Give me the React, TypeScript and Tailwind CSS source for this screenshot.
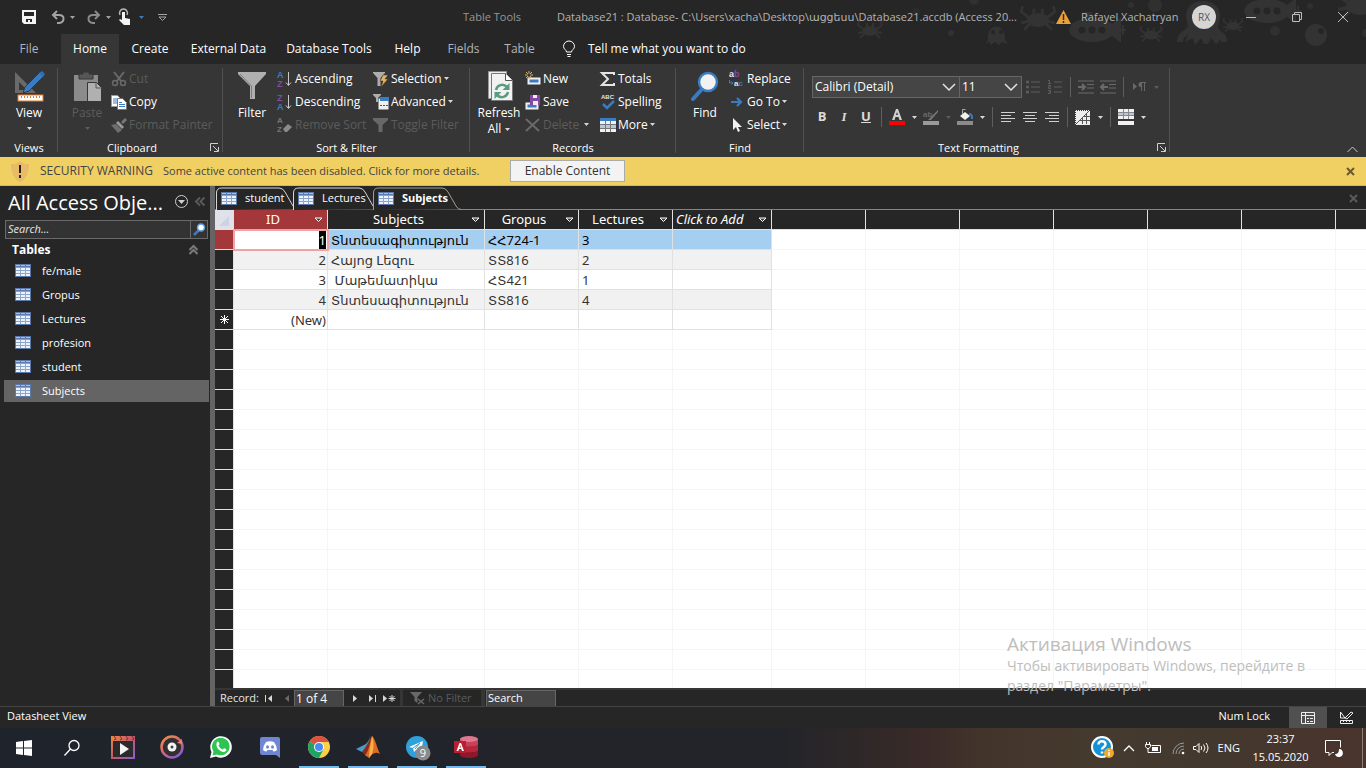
import React from "react";

type Kids = { children?: React.ReactNode };

const Svg = ({ w = 16, h = 16, vb, children }: Kids & { w?: number; h?: number; vb?: string }) => (
  <svg width={w} height={h} viewBox={vb ?? `0 0 ${w} ${h}`} fill="none" aria-hidden="true" className="shrink-0 overflow-visible">
    {children}
  </svg>
);

const Down = ({ color = "#d8d8d8" }: { color?: string }) => (
  <Svg w={5} h={3}><path d="M0 0h5L2.500 3z" fill={color} /></Svg>
);

const Sep = () => <span className="mx-1 h-5 w-px shrink-0 bg-[#5f5f5f]" />;

/* ---------- ribbon icons ---------- */

const ViewIcon = () => (
  <Svg w={32} h={32}>
    <path d="M2 2v21h21L2 2zm4 10 8 8H6v-8z" fill="#6a6a6a" fillRule="evenodd" />
    <path d="m10 23 2-6L27 2l4 4-15 15-6 2z" fill="#3a7cc4" stroke="#363636" />
    <path d="m26 3 3-2 3 3-2 3z" fill="#2f6fb5" />
    <rect x="5" y="25" width="25" height="6" fill="#fff" stroke="#e07b28" />
    <path d="M8.500 26v2m3-2v2m3-2v2m3-2v2m3-2v2m3-2v2m3-2v2" stroke="#e07b28" />
  </Svg>
);
const PasteIcon = () => (
  <Svg w={32} h={32}>
    <path d="M3 5h24v26H3z" fill="#8b8b8b" />
    <path d="M8 4h4V2h6v2h4v5H8z" fill="#575757" stroke="#363636" />
    <path d="M16.500 12.500h9l5 5v14h-14z" fill="#b0b0b0" stroke="#363636" />
    <path d="M25 12v6h6" stroke="#555" />
  </Svg>
);
const CutIcon = () => (
  <Svg>
    <path d="m3 1 7 9M13 1 6 10" stroke="#6a6a6a" strokeWidth="2" />
    <circle cx="4" cy="12" r="2.500" stroke="#6a6a6a" strokeWidth="1.500" />
    <circle cx="12" cy="12" r="2.500" stroke="#6a6a6a" strokeWidth="1.500" />
  </Svg>
);
const CopyIcon = () => (
  <Svg>
    <path d="M.5 1.500h6l3 3v8h-9z" fill="#fff" stroke="#9a9a9a" />
    <path d="M2 5h4M2 7h4M2 9h4" stroke="#3a7cc4" />
    <path d="M6.500 4.500h5l4 4v7h-9z" fill="#fff" stroke="#777" />
    <path d="M8 8.500h3m-3 2h6m-6 2h6" stroke="#3a7cc4" />
  </Svg>
);
const PainterIcon = () => (
  <Svg>
    <path d="m10 5 4-4 2 2-4 4z" fill="#777" />
    <path d="m7 4 6 6-2 2-6-6z" fill="#9a9a9a" />
    <path d="m5 7 6 6-4 3-7-8z" fill="#6e6e6e" />
  </Svg>
);
const FilterIcon = () => (
  <Svg w={32} h={32}>
    <path d="M2 2h28v2L19 16v13h-5V16L2 4z" fill="#b0b0b0" />
    <path d="M4 4l11.500 12v12" stroke="#7d7d7d" />
  </Svg>
);
const SortIcon = ({ top, bottom, tc, bc }: { top: string; bottom: string; tc: string; bc: string }) => (
  <Svg>
    <text x="0" y="7" fontSize="9" fontWeight="700" fill={tc} fontFamily="Liberation Sans">{top}</text>
    <text x="0" y="16" fontSize="9" fontWeight="700" fill={bc} fontFamily="Liberation Sans">{bottom}</text>
    <path d="M11.500 1v13M9 11.500l2.500 3 2.500-3" stroke="#c9c9c9" />
  </Svg>
);
const RemoveSortIcon = () => (
  <Svg>
    <text x="0" y="6" fontSize="8" fontWeight="700" fill="#777" fontFamily="Liberation Sans">A</text>
    <text x="0" y="15" fontSize="8" fontWeight="700" fill="#777" fontFamily="Liberation Sans">Z</text>
    <path d="m6 12 5-5 4 3-5 5H8z" fill="#8b8b8b" />
  </Svg>
);
const SelectionIcon = () => (
  <Svg>
    <path d="M0 1h12v1L7.500 7v8h-3V7L0 2z" fill="#adadad" />
    <path d="m10 4-3 6h3l-2 6 7-8h-3l3-4z" fill="#e3b15f" stroke="#363636" strokeWidth=".5" />
  </Svg>
);
const AdvancedIcon = () => (
  <Svg>
    <path d="M0 0h8v1L5 4v4H3V4L0 1z" fill="#adadad" />
    <path d="M5.500 4.500h10v11h-10z" fill="#efefef" />
    <path d="M7 3h9v4H7z" fill="#3a7cc4" />
    <path d="M7 11.500h2m1 0h2m1 0h2" stroke="#555" />
  </Svg>
);
const ToggleIcon = () => <Svg><path d="M0 1h15v2L9.500 8v7h-4V8L0 3z" fill="#686868" /></Svg>;
const RefreshIcon = () => (
  <Svg w={32} h={32}>
    <path d="M5.500 1.500h18v27h-18z" fill="#efefef" stroke="#999" />
    <path d="M8.500 3.500h14l7 7v20h-21z" fill="#f2f2f2" stroke="#777" />
    <path d="M22.500 3.500v7h7" fill="#fff" stroke="#555" />
    <path d="M13 20c1-5 7-7 11-3M25 22c-1 5-7 7-11 3" stroke="#5b9b80" strokeWidth="2.500" />
    <path d="M26.500 13v7h-7zM11.500 29v-7h7z" fill="#5b9b80" />
  </Svg>
);
const NewIcon = () => (
  <Svg>
    <path d="M3.500 7.500h11v5h-11z" fill="#3a7cc4" stroke="#efefef" strokeWidth="2" />
    <path d="M4 0v8M0 4h8M1 1l6 6M7 1 1 7" stroke="#e3b15f" />
    <circle cx="4" cy="4" r="1.500" fill="#363636" />
  </Svg>
);
const SaveIcon = () => (
  <Svg>
    <path d="M1.500 9.500h11v5h-11z" fill="#3a7cc4" stroke="#efefef" strokeWidth="2" />
    <path d="M5 1h10v10H5z" fill="#8449a0" />
    <path d="M8 1h4v3H8zm0 6h5v4H8z" fill="#f3e8f7" />
  </Svg>
);
const DeleteIcon = () => <Svg><path d="m1 2 13 12M14 2 1 14" stroke="#6a6a6a" strokeWidth="2" /></Svg>;
const SigmaIcon = () => <Svg><path d="M14 4V2H2l6 6-6 6h12v-2" stroke="#e4e4e4" strokeWidth="2" /></Svg>;
const SpellIcon = () => (
  <Svg>
    <text x="1" y="5" fontSize="6" fontWeight="700" fill="#e4e4e4" fontFamily="Liberation Sans">ABC</text>
    <path d="m3 10 4 4 7-7" stroke="#3a7cc4" strokeWidth="2.500" />
  </Svg>
);
const MoreIcon = () => (
  <Svg>
    <path d="M0 1h16v14H0z" fill="#f1f1f1" />
    <path d="M0 1h16v3H0z" fill="#3a7cc4" />
    <path d="M0 7h16v4H0z" fill="#b7c9dd" />
    <path d="M5.500 4v11m5-11v11M0 7.500h16m-16 4h16" stroke="#777" />
  </Svg>
);
const FindIcon = () => (
  <Svg w={32} h={32}>
    <path d="M14 18 4 29" stroke="#3a7cc4" strokeWidth="4" strokeLinecap="round" />
    <circle cx="19" cy="12" r="9" fill="#f2f2f2" stroke="#3a7cc4" strokeWidth="2.500" />
  </Svg>
);
const ReplaceIcon = () => (
  <Svg>
    <text x="0" y="6" fontSize="9" fontWeight="700" fontFamily="Liberation Sans" fill="#e4e4e4">a<tspan fill="#8449a0">b</tspan></text>
    <text x="5" y="15" fontSize="8" fontWeight="700" fontFamily="Liberation Sans" fill="#e4e4e4">a<tspan fill="#3a7cc4">c</tspan></text>
    <path d="M.5 9v3H4M2.500 10.500 4 12l-1.500 1.500" stroke="#3a7cc4" />
  </Svg>
);
const GoIcon = () => <Svg><path d="M2 8h10M8 4l4 4-4 4" stroke="#3a7cc4" strokeWidth="2.200" /></Svg>;
const CursorIcon = () => <Svg><path d="M4 1v12l3-3 2 5 2-1-2-4h4z" fill="#f1f1f1" /></Svg>;

/* ---------- ribbon building blocks ---------- */

const Group = ({ label, width, launcher, children }: Kids & { label: string; width: string; launcher?: boolean }) => (
  <section aria-label={label} className={`flex shrink-0 flex-col pt-[3px] ${width}`}>
    <div className="flex flex-1">
      <div className="min-w-0 flex-1">{children}</div>
      <span className="-mb-4 mt-px w-px bg-[#505050]" />
    </div>
    <div className="flex h-[21px] items-center justify-center pr-1 pt-[2px]">
      <span className={`flex-1 text-center text-[11px] leading-4 text-white ${launcher ? "pr-1" : "pl-1"}`}>{label}</span>
      {launcher && (
        <button aria-label={`${label} settings`}>
          <Svg w={9} h={9}><path d="M.5 8V.5H8M3 3l5 5M8.500 4v4.500H4" stroke="#cfcfcf" /></Svg>
        </button>
      )}
    </div>
  </section>
);

const Big = ({ icon, lines, arrow, off }: { icon: React.ReactNode; lines: string[]; arrow?: "below" | "beside"; off?: boolean }) => (
  <button disabled={off} className={`flex w-[58px] shrink-0 flex-col items-center pt-[3px] text-[12px] leading-4 ${off ? "text-[#5c5c5c]" : "text-white"}`}>
    {icon}
    {lines.map((l, i) => (
      <span key={l} className={`flex items-center gap-1 ${i === 0 ? "mt-[3px]" : ""}`}>
        {l}
        {arrow === "beside" && i === lines.length - 1 && <Down />}
      </span>
    ))}
    {arrow === "below" && <span className="mt-[6px]"><Down color={off ? "#5c5c5c" : "#d8d8d8"} /></span>}
  </button>
);

const Cmd = ({ icon, label, arrow, off }: { icon: React.ReactNode; label: string; arrow?: boolean; off?: boolean }) => (
  <button disabled={off} className={`flex h-[23px] w-full items-center gap-[2px] whitespace-nowrap text-[12px] ${off ? "text-[#5c5c5c]" : "text-white"}`}>
    {icon}
    <span>{label}</span>
    {arrow && <Down />}
  </button>
);

const Tool = ({ label, children, arrow, off }: Kids & { label: string; arrow?: boolean; off?: boolean }) => (
  <button aria-label={label} disabled={off} className="flex h-[22px] shrink-0 items-center">
    <span className="flex w-[22px] justify-center">{children}</span>
    {arrow && <span className="flex w-3 justify-center"><Down color={off ? "#5c5c5c" : "#d8d8d8"} /></span>}
  </button>
);

const Align = ({ d }: { d: string }) => <Svg w={14} h={12}><path d={d} stroke="#d0d0d0" /></Svg>;

const Ribbon = () => (
  <div className="relative flex h-[93px] shrink-0 bg-[#363636]">
    <Group label="Views" width="w-[58px]">
      <div className="-mr-px"><Big icon={<ViewIcon />} lines={["View"]} arrow="below" /></div>
    </Group>
    <Group label="Clipboard" width="w-[165px]" launcher>
      <div className="flex">
        <Big icon={<PasteIcon />} lines={["Paste"]} arrow="below" off />
        <div className="-ml-[5px]">
          <Cmd icon={<CutIcon />} label="Cut" off />
          <Cmd icon={<CopyIcon />} label="Copy" />
          <Cmd icon={<PainterIcon />} label="Format Painter" off />
        </div>
      </div>
    </Group>
    <Group label="Sort & Filter" width="w-[247px]">
      <div className="flex">
        <Big icon={<FilterIcon />} lines={["Filter"]} />
        <div className="-ml-1 w-24 shrink-0">
          <Cmd icon={<SortIcon top="A" bottom="Z" tc="#3a7cc4" bc="#8449a0" />} label="Ascending" />
          <Cmd icon={<SortIcon top="Z" bottom="A" tc="#8449a0" bc="#3a7cc4" />} label="Descending" />
          <Cmd icon={<RemoveSortIcon />} label="Remove Sort" off />
        </div>
        <div>
          <Cmd icon={<SelectionIcon />} label="Selection" arrow />
          <Cmd icon={<AdvancedIcon />} label="Advanced" arrow />
          <Cmd icon={<ToggleIcon />} label="Toggle Filter" off />
        </div>
      </div>
    </Group>
    <Group label="Records" width="w-[206px]">
      <div className="flex">
        <Big icon={<RefreshIcon />} lines={["Refresh", "All"]} arrow="beside" />
        <div className="-ml-[3px] w-[75px] shrink-0">
          <Cmd icon={<NewIcon />} label="New" />
          <Cmd icon={<SaveIcon />} label="Save" />
          <div className="flex items-center">
            <Cmd icon={<DeleteIcon />} label="Delete" off />
            <button aria-label="Delete options" className="-ml-4 mr-2 shrink-0"><Down /></button>
          </div>
        </div>
        <div>
          <Cmd icon={<SigmaIcon />} label="Totals" />
          <Cmd icon={<SpellIcon />} label="Spelling" />
          <Cmd icon={<MoreIcon />} label="More" arrow />
        </div>
      </div>
    </Group>
    <Group label="Find" width="w-[128px]">
      <div className="flex">
        <Big icon={<FindIcon />} lines={["Find"]} />
        <div className="-ml-[5px]">
          <Cmd icon={<ReplaceIcon />} label="Replace" />
          <Cmd icon={<GoIcon />} label="Go To" arrow />
          <Cmd icon={<CursorIcon />} label="Select" arrow />
        </div>
      </div>
    </Group>
    <Group label="Text Formatting" width="w-[366px]" launcher>
      <div className="flex flex-col gap-2 pl-2 pt-[9px]">
        <div className="flex h-[22px] items-center">
          <Combo label="Font" value="Calibri (Detail)" width="w-[148px]" />
          <Combo label="Font size" value="11" width="-ml-px w-[63px]" />
          <Tool label="Bullets" off><Svg w={14} h={14}><path d="M5 2h9M5 7h9M5 12h9" stroke="#5c5c5c" /><path d="M0 2h3M0 7h3M0 12h3" stroke="#5c5c5c" strokeWidth="2.500" /></Svg></Tool>
          <Tool label="Numbering" off>
            <Svg w={14} h={16}>
              <path d="M6 3h8M6 8h8M6 13h8" stroke="#5c5c5c" />
              <path d="M0 1.500h1.500v3M0 4.500h3M0 6.500h2.500v1.500H.5v1.500H3M0 11.500h2.500V13H1m1.500 0v1.500H0" stroke="#5c5c5c" />
            </Svg>
          </Tool>
          <Sep />
          <Tool label="Increase indent" off><Svg><path d="M0 2h16M9 5.500h7M9 9h7M0 14h16" stroke="#6a6a6a" /><path d="M0 8h7M4 5l3 3-3 3" stroke="#6a6a6a" strokeWidth="2" /></Svg></Tool>
          <Tool label="Decrease indent" off><Svg><path d="M0 2h16M9 5.500h7M9 9h7M0 14h16" stroke="#6a6a6a" /><path d="M8 8H1M4 5 1 8l3 3" stroke="#6a6a6a" strokeWidth="2" /></Svg></Tool>
          <Sep />
          <Tool label="Text direction" arrow off><Svg w={13} h={10}><path d="M0 1v7l4-3.500zM8 0a2.500 2.500 0 0 0 0 5v4h1V1h2v8h1V1h1V0z" fill="#686868" /></Svg></Tool>
        </div>
        <div className="-ml-px flex h-[22px] items-center text-[13px] font-bold text-[#dcdcdc]">
          <Tool label="Bold">B</Tool>
          <Tool label="Italic"><i className="font-['Liberation_Serif']">I</i></Tool>
          <Tool label="Underline"><u>U</u></Tool>
          <Sep />
          <Tool label="Font color" arrow><Svg><path d="m3 11 4-11h2l4 11h-2.500l-1-3h-3l-1 3zm4-5h2L8 3z" fill="#d0d0d0" /><path d="M0 12h16v4H0z" fill="#f00" /></Svg></Tool>
          <Tool label="Highlight" arrow off><Svg><text x="0" y="8" fontSize="8" fill="#686868" fontFamily="Liberation Sans">ab</text><path d="m15 1-7 7-3 3h3l7-8z" fill="#777" /><path d="M0 12h16v4H0z" fill="#9a9a9a" /></Svg></Tool>
          <Tool label="Fill color" arrow><Svg><path d="m3 7 5-4 5 4-5 4z" fill="#f1f1f1" /><path d="M5.500 5V.5h3" stroke="#aaa" /><path d="M12 5c3 0 3 2 3 5" stroke="#3a7cc4" strokeWidth="2" /><path d="M0 12h16v4H0z" fill="#8b8b8b" /></Svg></Tool>
          <Sep />
          <Tool label="Align left"><Align d="M0 1.500h14M0 4.500h10M0 7.500h14M0 10.500h10" /></Tool>
          <Tool label="Align center"><Align d="M0 1.500h14M2 4.500h10M0 7.500h14M2 10.500h10" /></Tool>
          <Tool label="Align right"><Align d="M0 1.500h14M4 4.500h10M0 7.500h14M4 10.500h10" /></Tool>
          <Sep />
          <Tool label="Gridlines" arrow><Svg><path d="M0 1h15v15H0z" fill="#eee" /><path d="M15 1 0 16M11.500 5v10M7.500 9v6M15 7.500H9M15 11.500H5" stroke="#555" /><path d="M0 1.500h15M.5 1v15" stroke="#363636" strokeDasharray="1 1" /></Svg></Tool>
          <Sep />
          <Tool label="Alternate row color" arrow><Svg><path d="M0 0h16v10H0zM0 12h16v4H0z" fill="#f1f1f1" /><path d="M0 4h16v3H0z" fill="#b7c9dd" /><path d="M5.500 0v10m5-10v10M0 3.500h16m-16 3h16" stroke="#888" /></Svg></Tool>
        </div>
      </div>
    </Group>
    <button aria-label="Collapse ribbon" className="ml-auto mr-2 self-end pb-1">
      <Svg w={11} h={7}><path d="m.5 6 5-5 5 5" stroke="#c8c8c8" /></Svg>
    </button>
  </div>
);

const Combo = ({ label, value, width }: { label: string; value: string; width: string }) => (
  <label className={`relative flex h-[22px] shrink-0 items-center border border-[#666] bg-[#454545] ${width}`}>
    <select aria-label={label} className="h-full w-full appearance-none bg-transparent pl-[2px] text-[12px] text-white outline-none">
      <option>{value}</option>
    </select>
    <span className="pointer-events-none absolute right-[3px]">
      <Svg w={14} h={8}><path d="m1 1 6 6 6-6" stroke="#e4e4e4" strokeWidth="1.500" /></Svg>
    </span>
  </label>
);

/* ---------- title bar ---------- */

const Crab = ({ x, y, s = 1 }: { x: number; y: number; s?: number }) => (
  <g transform={`translate(${x} ${y}) scale(${s})`}>
    <ellipse cx="0" cy="0" rx="8" ry="5" fill="#333" />
    <path d="M-7-2-12-6l1-4M7-2l5-4-1-4M-7 1l-5 1M7 1l5 1M-6 3l-4 4M6 3l4 4M-3-4v-4M3-4v-4" stroke="#333" strokeWidth="2" />
  </g>
);
const Sub = ({ x, y }: { x: number; y: number }) => (
  <g transform={`translate(${x} ${y})`}>
    <ellipse cx="0" cy="0" rx="23" ry="12" fill="#333" />
    <path d="M-6-10v-7h5v7M18-3l10-8v22L18 3zM26 0h8M31-5v10" fill="#333" stroke="#333" strokeWidth="2" />
    <circle cx="-10" cy="0" r="3.500" fill="#262626" /><circle cx="0" cy="0" r="3.500" fill="#262626" /><circle cx="10" cy="0" r="3.500" fill="#262626" />
  </g>
);
const SeaPattern = () => (
  <svg width="560" height="64" viewBox="806 0 560 64" fill="none" aria-hidden="true" className="absolute right-0 top-0">
    <Crab x={870} y={31} />
    <circle cx="951" cy="33" r="3" fill="#323232" /><circle cx="974" cy="0" r="5" fill="#303030" /><circle cx="916" cy="12" r="4" fill="#2b2b2b" />
    <path d="M988 40c-2-18 18-18 17 0l3 4-6-2-3 3-4-3-4 3-2-3-4 2z" fill="#333" />
    <circle cx="993" cy="32" r="2" fill="#262626" /><circle cx="1001" cy="32" r="2" fill="#262626" />
    <Crab x={1038} y={20} s={1.4} />
    <Sub x={1092} y={30} />
    <circle cx="1131" cy="5" r="3" fill="#303030" /><circle cx="1155" cy="5" r="7" fill="#303030" />
    <Crab x={1151} y={35} s={0.9} />
    <path d="M1186 16c0-20 34-20 34 0l-2 12c5 4 0 10 5 9l-7 7-5-6-3 6h-4l-3-6-6 7-2-7-8 4c2-6 5-8 3-14z" fill="#333" />
    <path d="M1190 28c-4 8-10 5-10 14M1214 28c4 8 10 5 10 14" stroke="#333" strokeWidth="6" />
    <Crab x={1233} y={26} s={0.8} />
    <Sub x={1267} y={11} />
    <circle cx="1275" cy="31" r="5" fill="#303030" /><circle cx="1310" cy="6" r="3" fill="#303030" />
    <circle cx="1316" cy="35" r="11" fill="#333" /><circle cx="1321" cy="31" r="3" fill="#262626" />
    <Crab x={1360} y={6} s={1.8} /><circle cx="1366" cy="33" r="4" fill="#303030" />
  </svg>
);

const TitleBar = () => (
  <header className="relative flex h-[34px] shrink-0 items-center">
    <div className="ml-[22px] flex w-[441px] items-center">
      <button aria-label="Save" className="mr-[15px]">
        <Svg w={14} h={14}><path d="M0 0h14v14H2l-2-2zM2 2v4h10V2zm2 7v3h2v-2h2v2h2V9z" fill="#f4f4f4" fillRule="evenodd" /></Svg>
      </button>
      <button aria-label="Undo" className="mr-[5px]">
        <Svg w={14} h={13}><path d="M2 4h6c6 0 6 7 0 8H6M6 0 2 4l4 4" stroke="#a3a3a3" strokeWidth="2" /></Svg>
      </button>
      <Down color="#a3a3a3" />
      <button aria-label="Redo" className="ml-3 mr-[5px]">
        <Svg w={14} h={13}><path d="M12 4H6c-6 0-6 7 0 8h2M8 0l4 4-4 4" stroke="#8b8b8b" strokeWidth="2" /></Svg>
      </button>
      <Down color="#a3a3a3" />
      <button aria-label="Touch mode" className="ml-[7px] mr-[7px]">
        <Svg w={14} h={17}>
          <path d="M2 6a4 4 0 1 1 7 0" stroke="#b5b5b5" strokeWidth="1.500" />
          <path d="M4 3h3v6l5 1v6H6l-5-5 1-1 2 1z" fill="#f4f4f4" />
        </Svg>
      </button>
      <Down color="#3a7cc4" />
      <button aria-label="Customize toolbar" className="ml-[14px]">
        <Svg w={9} h={7}><path d="M0 .5h9M1 3h7L4.500 6.500z" stroke="#a3a3a3" /></Svg>
      </button>
    </div>
    <span className="w-[94px] text-[11px] text-[#979797]">Table Tools</span>
    <SeaPattern />
    <h1 className="relative shrink-0 whitespace-nowrap text-[11px] text-[#b4b4b4]">
      Database21 : Database- C:\Users\xacha\Desktop\ացցեսս\Database21.accdb (Access 20...
    </h1>
    <div className="relative ml-auto flex shrink-0 items-center">
      <Svg w={15} h={14}><path d="M7.500 0 15 14H0z" fill="#eba038" /><path d="M7.500 4v6m0 1v2" stroke="#3a2a10" strokeWidth="1.500" /></Svg>
      <span className="ml-[10px] w-[111px] whitespace-nowrap text-[11px] text-[#b4b4b4]">Rafayel Xachatryan</span>
      <span className="flex h-6 w-6 items-center justify-center rounded-full bg-[#d5d5d5] text-[10px] text-[#555]">RX</span>
      <button aria-label="Minimize" className="ml-[30px] flex w-[10px] justify-center"><Svg w={10} h={10}><path d="M0 5.500h10" stroke="#bdbdbd" /></Svg></button>
      <button aria-label="Restore" className="ml-9"><Svg w={10} h={10}><path d="M.5 2.500h7v7h-7zM2.500 2V.5h7v7H8" stroke="#bdbdbd" /></Svg></button>
      <button aria-label="Close" className="ml-9 mr-[18px]"><Svg w={10} h={10}><path d="m0 0 10 10M10 0 0 10" stroke="#bdbdbd" /></Svg></button>
    </div>
  </header>
);

const TABS = [
  { t: "File", c: "w-[61px] pr-[3px] text-[#b4b4b4]" },
  { t: "Home", c: "h-full w-[58px] bg-[#363636] text-white" },
  { t: "Create", c: "w-[62px] text-white" },
  { t: "External Data", c: "w-[95px] text-white" },
  { t: "Database Tools", c: "w-[106px] text-white" },
  { t: "Help", c: "w-[51px] text-white" },
  { t: "Fields", c: "w-[61px] text-[#b4b4b4]" },
  { t: "Table", c: "w-[51px] text-[#b4b4b4]" },
];

const RibbonTabs = () => (
  <nav className="flex h-[30px] shrink-0 items-center text-[12px]">
    {TABS.map((x) => (
      <button key={x.t} className={`whitespace-nowrap text-center ${x.c}`}>{x.t}</button>
    ))}
    <button className="ml-[18px] flex items-center gap-[13px] whitespace-nowrap text-white">
      <Svg w={12} h={16}><path d="M3.500 11C3.500 9 .5 8 .5 5.500a5 5 0 0 1 11 0C11.500 8 8.500 9 8.500 11zM4 13.500h4M4.500 15.500h3" stroke="#fff" /></Svg>
      Tell me what you want to do
    </button>
  </nav>
);

const Warning = () => (
  <div className="flex h-[29px] shrink-0 items-center border-b border-[#d7b46b] bg-[#f0cf63] pl-[11px] text-[#444]">
    <Svg w={18} h={21}><path d="M9 0c3 3 6 3 9 3 0 9-3 15-9 18C3 18 0 12 0 3c3 0 6 0 9-3z" fill="#e9bb66" /><path d="M9 4v8m0 2v3" stroke="#222" strokeWidth="2" /></Svg>
    <span className="ml-[11px] w-[123px] text-[12px]">SECURITY WARNING</span>
    <a href="#details" className="w-[347px] whitespace-nowrap text-[11px]">Some active content has been disabled. Click for more details.</a>
    <button className="h-[22px] w-[115px] border border-[#ababab] bg-[#f3f3f3] text-[12px] text-[#333]">Enable Content</button>
    <button aria-label="Dismiss" className="ml-auto mr-[11px]"><Svg w={9} h={9}><path d="m1 1 7 7M8 1 1 8" stroke="#6b5a2c" strokeWidth="2" /></Svg></button>
  </div>
);

/* ---------- navigation pane ---------- */

const TableIcon = () => (
  <Svg w={16} h={13}>
    <path d="M0 0h16v13H0z" fill="#5b79ad" />
    <path d="M1 4h4v2H1zm5 0h4v2H6zm5 0h4v2h-4zM1 7h4v2H1zm5 0h4v2H6zm5 0h4v2h-4zM1 10h4v2H1zm5 0h4v2H6zm5 0h4v2h-4z" fill="#eef3fb" />
    <path d="M1 1.500h4m1 0h4m1 0h4" stroke="#a9bede" />
    <path d="M1 3.500h14M1 6.500h14M1 9.500h14M5.500 4v8m5-8v8" stroke="#a9bede" strokeOpacity=".6" />
  </Svg>
);

const NAV = ["fe/male", "Gropus", "Lectures", "profesion", "student", "Subjects"];

const Sidebar = () => (
  <aside className="flex w-[210px] shrink-0 flex-col">
    <div className="flex h-[34px] items-center pl-2 pr-1">
      <h2 className="w-[167px] whitespace-nowrap text-[20px] leading-8 text-white">All Access Obje...</h2>
      <button aria-label="Pane menu" className="-mt-1"><Svg w={13} h={13}><circle cx="6.500" cy="6.500" r="6" stroke="#d0d0d0" /><path d="M3 5h7L6.500 9z" fill="#d0d0d0" /></Svg></button>
      <button aria-label="Collapse pane" className="-mt-1 ml-[7px]"><Svg w={10} h={9}><path d="M5 .5 1 4.500l4 4M9.500.5l-4 4 4 4" stroke="#5a5a5a" strokeWidth="2" /></Svg></button>
    </div>
    <div className="ml-[5px] mr-[2px] flex h-[19px] border border-[#6a6a6a] bg-[#333]">
      <input aria-label="Search objects" placeholder="Search..." className="min-w-0 flex-1 bg-transparent px-[2px] text-[11px] italic text-white outline-none placeholder:text-[#e6e6e6]" />
      <button aria-label="Search" className="flex w-[17px] items-center justify-center border-l border-[#6a6a6a]">
        <Svg w={13} h={13}><path d="M6 7 1 12" stroke="#3a7cc4" strokeWidth="2.500" /><circle cx="8" cy="4.500" r="3.500" fill="#fff" stroke="#5e9bdc" strokeWidth="1.500" /></Svg>
      </button>
    </div>
    <button className="flex h-[21px] items-center justify-between px-3 pt-px text-[12px] font-bold text-white">
      Tables
      <Svg w={9} h={10}><path d="m.5 5 4-4 4 4m-8 4 4-4 4 4" stroke="#7a7a7a" strokeWidth="2" /></Svg>
    </button>
    <ul className="pl-1 pr-px">
      {NAV.map((n) => (
        <li key={n} className="pb-[2px]">
          <button className={`flex h-[22px] w-full items-center gap-[11px] pl-[11px] text-[11px] text-white ${n === "Subjects" ? "bg-[#646464]" : ""}`}>
            <span className="pb-[2px]"><TableIcon /></span>
            {n}
          </button>
        </li>
      ))}
    </ul>
  </aside>
);

/* ---------- document tabs and datasheet ---------- */

const DocTab = ({ name, width, w, active }: { name: string; width: string; w: number; active?: boolean }) => (
  <button className={`relative flex h-[22px] shrink-0 items-center gap-2 pl-[5px] text-[11px] text-white ${active ? "font-bold" : ""} ${width}`}>
    <svg width={w} height="23" viewBox={`0 0 ${w} 23`} fill="none" aria-hidden="true" className="absolute left-0 top-0 overflow-visible">
      <path d={`M.5 23V6q0-5 5-5H${w - 14}q4 0 6 4l8 14q2 3.500 5 3.500`} fill="#262626" stroke={active ? "#a39d95" : "#d5d8da"} />
    </svg>
    <span className="relative"><TableIcon /></span>
    <span className="relative">{name}</span>
  </button>
);

const COLS = [
  { n: "ID", w: "w-[94px]" },
  { n: "Subjects", w: "w-[157px]" },
  { n: "Gropus", w: "w-[94px]" },
  { n: "Lectures", w: "w-[94px]" },
  { n: "Click to Add", w: "w-[99px]" },
];
const ROWS = [
  ["1", "Տնտեսագիտություն", "ՀՀ724-1", "3"],
  ["2", "Հայոց Լեզու", "ՏՏ816", "2"],
  ["3", "\u00a0Մաթեմատիկա", "ՀՏ421", "1"],
  ["4", "Տնտեսագիտություն", "ՏՏ816", "4"],
  ["(New)", "", "", ""],
];
const SPARE = [0, 1, 2, 3, 4, 5];
const BLANK = Array.from({ length: 18 }, (_, i) => i);

const Datasheet = () => (
  <div className="min-h-0 flex-1 overflow-hidden bg-white">
    <table className="w-full table-fixed border-separate border-spacing-0 font-['Noto_Sans','DejaVu_Sans',sans-serif] text-[13px] leading-[18px] text-[#333]">
      <thead>
        <tr className="h-5">
          <th className="w-[19px] border-b border-r border-[#e1e1e1] bg-[#dfe2ea] p-0">
            <Svg w={18} h={18}><path d="M14 5v10H4z" fill="#cdd4e0" /></Svg>
          </th>
          {COLS.map((c) => (
            <th key={c.n} className={`border-b border-r border-[#e1e1e1] p-0 font-normal text-white ${c.w} ${c.n === "ID" ? "bg-[#a4373a]" : "bg-[#262626]"}`}>
              <div className="flex items-center pb-px leading-[17px]">
                <span className={`flex-1 whitespace-nowrap ${c.n === "Click to Add" ? "pl-[3px] text-left italic" : "pl-[2px] text-center"}`}>{c.n}</span>
                <button aria-label={`Filter ${c.n}`} className="px-1 pt-px"><Svg w={9} h={6}><path d="M1 1h7L4.500 4.500z" fill="#444" stroke="#fff" /></Svg></button>
              </div>
            </th>
          ))}
          {SPARE.map((s) => <th key={s} className="w-[94px] border-b border-r border-[#e1e1e1] bg-[#262626] p-0" />)}
          <th className="border-b border-[#e1e1e1] bg-[#262626] p-0" />
        </tr>
      </thead>
      <tbody>
        {ROWS.map((r, i) => {
          const bg = i === 0 ? "bg-[#a5cff1] text-black" : i % 2 ? "bg-[#f1f1f1]" : "bg-white";
          const last = i === 4 ? "bg-white" : bg;
          return (
            <tr key={i} className="h-5">
              <th className={`border-b border-r border-[#e1e1e1] p-0 ${i === 0 ? "bg-[#a4373a]" : "bg-[#262626]"}`}>
                {i === 4 && <span className="flex justify-center"><Svg w={9} h={9}><path d="M4.500 0v9M0 4.500h9M1 1l7 7M8 1 1 8" stroke="#fff" /></Svg></span>}
              </th>
              <td className={`border-b border-r border-[#e1e1e1] p-0 pr-px text-right ${i === 0 ? "bg-white outline-2 -outline-offset-1 outline-[#f0a3a6]" : last}`}>
                {i === 0 ? <span className="inline-block bg-black text-white">1</span> : r[0]}
              </td>
              {[1, 2, 3].map((k) => <td key={k} className={`whitespace-nowrap border-b border-r border-[#e1e1e1] p-0 pl-[3px] ${last}`}>{r[k]}</td>)}
              <td className={`border-b border-r border-[#e1e1e1] p-0 ${last}`} />
              {SPARE.map((s) => <td key={s} className="border-b border-r border-[#f5f5f5] p-0" />)}
              <td className="border-b border-[#f5f5f5] p-0" />
            </tr>
          );
        })}
        {BLANK.map((b) => (
          <tr key={b} className="h-5">
            <th className="border-b border-r border-[#e1e1e1] bg-[#262626] p-0" />
            {COLS.map((c) => <td key={c.n} className="border-b border-r border-[#f5f5f5] p-0" />)}
            {SPARE.map((s) => <td key={s} className="border-b border-r border-[#f5f5f5] p-0" />)}
            <td className="border-b border-[#f5f5f5] p-0" />
          </tr>
        ))}
      </tbody>
    </table>
  </div>
);

const RecordBar = () => (
  <div className="flex h-[18px] shrink-0 items-stretch border-t-2 border-[#363636] text-[11px] text-[#e6e6e6]">
    <span className="flex w-[50px] items-center pl-[5px]">Record:</span>
    <button aria-label="First record" className="w-[9px]"><Svg w={7} h={7}><path d="M.5 0v7" stroke="#d8d8d8" /><path d="M7 0v7L3 3.500z" fill="#d8d8d8" /></Svg></button>
    <button aria-label="Previous record" className="ml-[11px] w-[9px]"><Svg w={4} h={7}><path d="M4 0v7L0 3.500z" fill="#6a6a6a" /></Svg></button>
    <input aria-label="Current record" defaultValue="1 of 4" className="w-[50px] border border-b-0 border-[#666] bg-[#454545] px-px text-[12px] text-white outline-none" />
    <button aria-label="Next record" className="ml-[9px]"><Svg w={4} h={7}><path d="M0 0v7l4-3.500z" fill="#d8d8d8" /></Svg></button>
    <button aria-label="Last record" className="ml-3"><Svg w={7} h={7}><path d="M6.500 0v7" stroke="#d8d8d8" /><path d="M0 0v7l4-3.500z" fill="#d8d8d8" /></Svg></button>
    <button aria-label="New record" className="ml-[7px]"><Svg w={13} h={7}><path d="M0 0v7l4-3.500z" fill="#d8d8d8" /><path d="M9 0v7M5.500 3.500h7M6.500 1l5 5m0-5-5 5" stroke="#d8d8d8" /></Svg></button>
    <span className="ml-1 w-[3px] bg-[#363636]" />
    <span className="flex w-[78px] items-center gap-[3px] pl-[7px] text-[#5c5c5c]">
      <Svg w={15} h={14}><path d="M0 1h12L7.500 6v6l-3-2V6z" fill="#686868" /><path d="m8 8 6 5m0-5-6 5" stroke="#686868" strokeWidth="1.500" /></Svg>
      <span className="whitespace-nowrap">No Filter</span>
    </span>
    <span className="w-1 bg-[#363636]" />
    <input aria-label="Search records" placeholder="Search" className="ml-px w-[70px] border border-b-0 border-[#666] bg-[#454545] px-px text-[11px] text-white outline-none placeholder:text-white" />
  </div>
);

/* ---------- status bar and taskbar ---------- */

const StatusBar = () => (
  <footer className="flex h-[22px] shrink-0 items-center border-t border-[#444] pl-[7px] text-[11px] text-white">
    <span className="pb-[2px]">Datasheet View</span>
    <span className="ml-auto mr-[19px] pb-[2px]">Num Lock</span>
    <button aria-label="Datasheet view" className="flex h-full w-[38px] items-center justify-center bg-[#505050]">
      <Svg w={14} h={12}><path d="M.5.5h13v11H.5zM4.500 0v12M0 3.500h14M6 6.500h2m1 0h3M6 9.500h2m1 0h3" stroke="#eee" /></Svg>
    </button>
    <button aria-label="Design view" className="flex h-full w-[39px] items-center justify-center">
      <Svg w={14} h={14}><path d="M.5 1v6H5zM5 7l6-6 2 1-6 6zM.5 9.500h12v3H.5zM3.500 9v2m3-2v2m3-2v2" stroke="#eee" /></Svg>
    </button>
  </footer>
);

const Movies = () => (
  <Svg w={24} h={23}>
    <defs><linearGradient id="mv" x1="0" y1="0" x2="1" y2="1"><stop stopColor="#f08a3c" /><stop offset=".5" stopColor="#c4586c" /><stop offset="1" stopColor="#8e5bd0" /></linearGradient></defs>
    <path d="M0 0h24v23H0z" fill="url(#mv)" /><path d="M2 5h20v16H2z" fill="#2b2b2b" />
    <path d="m3 0 2 3-2 1m6-4 2 3-2 1m6-4 2 3-2 1m6-4 2 3-2 1" stroke="#7d2f35" /><path d="m9 7 9 6-9 6z" fill="#f4f4f4" />
  </Svg>
);
const Groove = () => (
  <Svg w={24} h={24}>
    <defs><linearGradient id="gr" x1="0" y1="0" x2=".7" y2="1"><stop stopColor="#f4924b" /><stop offset=".5" stopColor="#d9676f" /><stop offset="1" stopColor="#8e5bd0" /></linearGradient></defs>
    <circle cx="12" cy="12" r="10.500" fill="#303030" stroke="url(#gr)" strokeWidth="2.500" />
    <path d="m17 8 5-4v5z" fill="#e8836a" /><circle cx="12" cy="12" r="4.500" fill="#f4f4f4" /><circle cx="12" cy="12" r="1.500" fill="#444" />
  </Svg>
);
const WhatsApp = () => (
  <Svg w={22} h={22}>
    <path d="m0 22 1.500-6A10.800 10.800 0 1 1 6 20.500z" fill="#fff" />
    <path d="m2.500 19.500 1-4A8.800 8.800 0 1 1 7 18.500z" fill="#2cc551" />
    <path d="M7 6c1-1 2 0 2.500 2 0 1-1 1-1 1.500 1 2 2 3 4 4 .7 0 1-1.500 2-1.200 2 1 2.500 1.200 1.500 2.500-3 4-12-3-9-8.800z" fill="#fff" />
  </Svg>
);
const Discord = () => (
  <Svg w={20} h={21}>
    <path d="M2 0h16q2 0 2 2v19l-4-3H2q-2 0-2-2V2q0-2 2-2z" fill="#6f86d3" />
    <path d="M6 5q4-1.500 8 0 2.500 3 3 8-2 1.500-3.500 1.500l-1-1.500h-5l-1 1.500Q5 14.500 3 13q.5-5 3-8z" fill="#fff" />
    <ellipse cx="7.500" cy="10" rx="1.500" ry="1.800" fill="#6f86d3" /><ellipse cx="12.500" cy="10" rx="1.500" ry="1.800" fill="#6f86d3" />
  </Svg>
);
const Chrome = () => (
  <Svg w={22} h={22}>
    <circle cx="11" cy="11" r="11" fill="#fbd04b" />
    <path d="M11 11 1.500 5.500A11 11 0 0 1 20.500 5.500L20.800 6H11z" fill="#dd4f43" />
    <path d="M1.500 5.500A11 11 0 0 0 11 22l4.500-8.500L11 11z" fill="#1fa463" />
    <circle cx="11" cy="11" r="5" fill="#fff" /><circle cx="11" cy="11" r="4" fill="#4a8af4" />
  </Svg>
);
const Matlab = () => (
  <Svg w={24} h={22}>
    <path d="m0 13 8-4c3-1 5-5 7-9l-5 15-4 1z" fill="#4e9bc8" /><path d="m6 16 4 4c3-2 4-13 6-20-3 4-5 10-10 16z" fill="#8b2b1c" />
    <path d="M16 0c3 2 5 12 8 18-5-3-8 0-11 4l-4-3c4-3 5-14 7-19z" fill="#e06a28" /><path d="M16 0c2 5 2 12 0 18l-3 4c0-6 2-16 3-22z" fill="#f7b240" />
  </Svg>
);
const Telegram = () => (
  <Svg w={22} h={22}>
    <circle cx="11" cy="11" r="11" fill="#2ea0db" /><path d="m3 11 14-6-2 12-5-3-2 2-1-4z" fill="#fff" /><path d="m7 12 7-5-5 6" stroke="#2ea0db" />
    <circle cx="17" cy="17" r="7.500" fill="#8a8a8a" /><text x="17" y="21" textAnchor="middle" fontSize="11" fill="#fff" fontFamily="Open Sans">9</text>
  </Svg>
);
const Access = () => (
  <Svg w={24} h={22}>
    <path d="M6 3h18v16c0 4-18 4-18 0z" fill="#8e1827" /><path d="M6 3h18v11c0 3-18 3-18 0z" fill="#b7273c" /><path d="M6 3h18v5c0 3-18 3-18 0z" fill="#c9405a" />
    <ellipse cx="15" cy="3" rx="9" ry="3" fill="#e0788d" /><path d="M0 5h12v12H0z" fill="#b81f30" />
    <path d="m2.500 15 3-8h1.500l3 8H8l-.6-2H5l-.6 2zm3-3.500h1.500L6.200 9z" fill="#fff" />
  </Svg>
);

const APPS = [
  { n: "Movies & TV", i: <Movies /> }, { n: "Groove", i: <Groove /> }, { n: "WhatsApp", i: <WhatsApp /> }, { n: "Discord", i: <Discord /> },
  { n: "Chrome", i: <Chrome />, on: true }, { n: "MATLAB", i: <Matlab />, on: true }, { n: "Telegram", i: <Telegram />, on: true }, { n: "Access", i: <Access />, on: true },
];

const Taskbar = () => (
  <div className="flex h-10 shrink-0 bg-[linear-gradient(90deg,#1f232b,#222429_57%,#3a2b28_68%,#43342b_72%,#453a2e_80%,#43382e_90%,#4a332d)] text-white">
    <button aria-label="Start" className="flex w-12 items-center justify-center">
      <Svg w={16} h={16}><path d="m0 2 7-1v6.500H0zM8 1l8-1v7.500H8zM0 8.500h7V15l-7-1zM8 8.500h8V16l-8-1z" fill="#fff" /></Svg>
    </button>
    <button aria-label="Search Windows" className="mr-[2px] flex w-12 items-center justify-center">
      <Svg w={16} h={16}><circle cx="10" cy="5.500" r="5" stroke="#fff" strokeWidth="1.300" /><path d="M6.500 9 .5 15.500" stroke="#fff" strokeWidth="1.300" /></Svg>
    </button>
    {APPS.map((a) => (
      <button key={a.n} aria-label={a.n} className="flex w-[49px] flex-col items-center">
        <span className="flex flex-1 items-center">{a.i}</span>
        <span className={`h-[2px] w-10 ${a.on ? "bg-[#76b9ed]" : ""}`} />
      </button>
    ))}
    <div className="ml-auto flex items-center">
      <button aria-label="Help"><Svg w={24} h={24}><circle cx="11" cy="11" r="10" fill="#1592d6" stroke="#fff" strokeWidth="2" /><path d="M7.500 8.500c0-4.500 7-4 7 0 0 2.500-3.500 2.500-3.500 5m0 2v2" stroke="#fff" strokeWidth="2.500" /><circle cx="18" cy="17" r="5" fill="#f0a92b" /><path d="M18 14v1m0 1v4" stroke="#fff" strokeWidth="1.500" /></Svg></button>
      <button aria-label="Hidden icons" className="ml-2"><Svg w={12} h={7}><path d="m1 6 5-5 5 5" stroke="#fff" strokeWidth="1.300" /></Svg></button>
      <button aria-label="Battery" className="ml-[10px]"><Svg w={16} h={12}><path d="M6.500 3.500h9v7h-11M1.500 0v2m3-2v2M.5 2.500h5v2l-1.500 2H2L.5 4.500zM3 7v3.500h2" stroke="#fff" /><path d="M7 5h6v4H7z" fill="#fff" /></Svg></button>
      <button aria-label="Network" className="ml-[11px]"><Svg w={12} h={12}><path d="M1 12A11 11 0 0 1 12 1M4 12a8 8 0 0 1 8-8M7 12a5 5 0 0 1 5-5" stroke="#999" /><circle cx="11" cy="11" r="1.300" fill="#fff" /></Svg></button>
      <button aria-label="Volume" className="ml-[9px]"><Svg w={16} h={12}><path d="M.5 4.500H3l3-3v9l-3-3H.5zM8 4q1.500 2 0 4M10.500 2.500q3 3.500 0 7M13 1q4 5 0 10" stroke="#fff" /></Svg></button>
      <button className="ml-[9px] text-[11px]">ENG</button>
      <button className="ml-[13px] flex w-[55px] flex-col items-center text-[11px] leading-[18px]"><span>23:37</span><span>15.05.2020</span></button>
      <button aria-label="Notifications" className="ml-[17px]"><Svg w={17} h={16}><path d="M9 12.500H7l-3 3v-3H.5V.5h15v7" stroke="#fff" /><path d="M14 9a4 4 0 1 1-4 5c3 0 4-2 4-5z" fill="#fff" /></Svg></button>
      <button aria-label="Show desktop" className="ml-5 h-10 w-1 border-l border-[#8a807a]" />
    </div>
  </div>
);

export default function App() {
  return (
    <div className="flex h-screen min-w-[1280px] flex-col overflow-hidden bg-[#262626] font-['Open_Sans','DejaVu_Sans',sans-serif]">
      <TitleBar />
      <RibbonTabs />
      <Ribbon />
      <Warning />
      <div className="flex min-h-0 flex-1">
        <Sidebar />
        <div className="w-[5px] shrink-0 bg-[#646464]" />
        <main className="relative flex min-w-0 flex-1 flex-col">
          <div className="flex h-6 shrink-0 items-end border-b border-[#858585] pl-px">
            <DocTab name="student" width="w-[77px]" w={77} />
            <DocTab name="Lectures" width="w-20" w={80} />
            <DocTab name="Subjects" width="w-[85px]" w={83} active />
            <button aria-label="Close tab" className="mb-[6px] ml-auto mr-2"><Svg w={9} h={9}><path d="m1 1 7 7M8 1 1 8" stroke="#5a5a5a" strokeWidth="2" /></Svg></button>
          </div>
          <Datasheet />
          <RecordBar />
          <div className="pointer-events-none absolute bottom-[10px] right-14 w-[303px] text-[#bdbdbd]">
            <p className="text-[19px] leading-6">Активация Windows</p>
            <p className="text-[14px] leading-5">Чтобы активировать Windows, перейдите в раздел "Параметры".</p>
          </div>
        </main>
      </div>
      <StatusBar />
      <Taskbar />
    </div>
  );
}
